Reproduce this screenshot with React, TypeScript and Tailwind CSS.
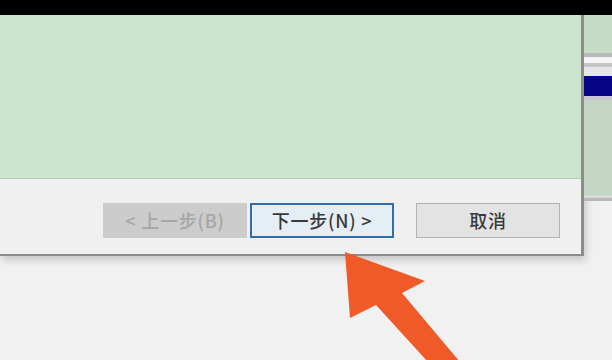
const Btn = ({
  children,
  className,
}: {
  children: React.ReactNode;
  className: string;
}) => (
  <div
    className={`w-[144px] h-[35px] flex items-center justify-center text-[18px] tracking-[0.8px] font-medium ${className}`}
  >
    {children}
  </div>
);

const App = () => {
  return (
    <div
      className="relative w-[612px] h-[360px] overflow-hidden bg-[#f1f1f1]"
      style={{ fontFamily: '"Noto Sans CJK SC", "Liberation Sans", sans-serif' }}
    >
      <div className="h-[15px] bg-black" />
      <div className="flex">
        {/* dialog */}
        <div className="w-[584px] shrink-0 border-r-[3px] border-b-[2px] border-[#8c8c8c] shadow-[2px_4px_8px_rgba(0,0,0,0.18)]">
          <div className="h-[164px] bg-[#cbe4cd] border-b border-[#b7cbb8]" />
          <div className="h-[75px] bg-[#f0f0f0] flex items-start pt-[24px] pl-[103px]">
            <Btn className="bg-[#cccccc] text-[#a6a6a6]">&lt; 上一步(B)</Btn>
            <Btn className="ml-[3px] bg-[#e6eef5] border-2 border-[#2f6ea6] text-[#3a3a3a]">
              下一步(N) &gt;
            </Btn>
            <Btn className="ml-[22px] bg-[#e3e3e3] border border-[#b3b3b3] text-[#3a3a3a]">
              取消
            </Btn>
          </div>
        </div>
        {/* window behind */}
        <div className="flex-1 flex flex-col">
          <div className="h-[38px] bg-[#c6dcc7]" />
          <div className="h-[4px] bg-[#b9b9b9]" />
          <div className="h-[6px] bg-[#f4f4f4]" />
          <div className="h-[4px] bg-[#c4c4c4]" />
          <div className="h-[9px] bg-[#e6e6e6]" />
          <div className="h-[20px] bg-[#050583]" />
          <div className="h-[4px] bg-[#c8c8d4]" />
          <div className="h-[95px] bg-[#c4d6c5]" />
          <div className="h-[3px] bg-[#d8d8d8]" />
          <div className="h-[3px] bg-[#b8b8b8]" />
        </div>
      </div>
      <svg
        className="absolute left-0 top-0"
        width="612"
        height="360"
        viewBox="0 0 612 360"
      >
        <polygon
          points="345,252 425,281 402,293 460,362 428,362 376,305 350,318"
          fill="#f05a28"
        />
      </svg>
    </div>
  );
};

export default App;
